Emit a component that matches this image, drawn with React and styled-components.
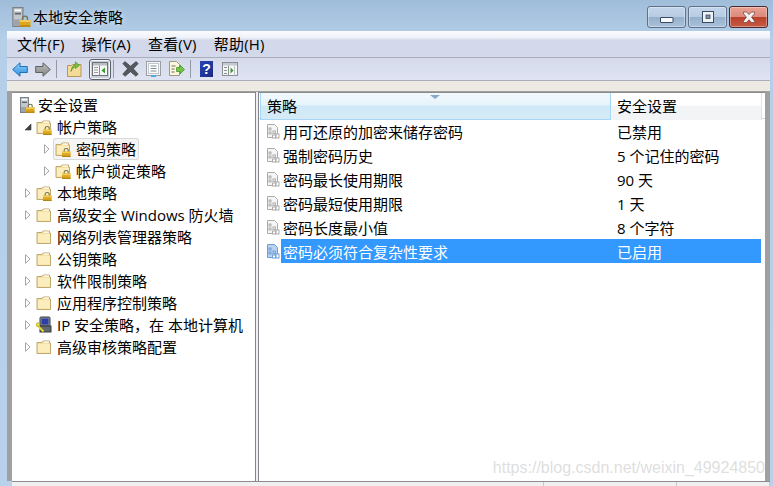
import styled, { createGlobalStyle } from "styled-components";

const treeItems = [
  { id: "accounts", label: "帐户策略", depth: 1, arrow: "open", icon: "lock" },
  { id: "password", label: "密码策略", depth: 2, arrow: "closed", icon: "lock", current: true },
  { id: "lockout", label: "帐户锁定策略", depth: 2, arrow: "closed", icon: "lock" },
  { id: "local", label: "本地策略", depth: 1, arrow: "closed", icon: "lock" },
  { id: "firewall", label: "高级安全 Windows 防火墙", depth: 1, arrow: "closed", icon: "folder" },
  { id: "netlist", label: "网络列表管理器策略", depth: 1, icon: "folder" },
  { id: "pubkey", label: "公钥策略", depth: 1, arrow: "closed", icon: "folder" },
  { id: "software", label: "软件限制策略", depth: 1, arrow: "closed", icon: "folder" },
  { id: "appctl", label: "应用程序控制策略", depth: 1, arrow: "closed", icon: "folder" },
  { id: "ipsec", label: "IP 安全策略，在 本地计算机", depth: 1, arrow: "closed", icon: "ip" },
  { id: "audit", label: "高级审核策略配置", depth: 1, arrow: "closed", icon: "folder" },
];

const policies = [
  { name: "用可还原的加密来储存密码", value: "已禁用" },
  { name: "强制密码历史", value: "5 个记住的密码" },
  { name: "密码最长使用期限", value: "90 天" },
  { name: "密码最短使用期限", value: "1 天" },
  { name: "密码长度最小值", value: "8 个字符" },
  { name: "密码必须符合复杂性要求", value: "已启用", selected: true },
];

function Lock({ x = 7, y = 7 }) {
  return (
    <g transform={`translate(${x} ${y})`}>
      <path d="M2.2 4V2.4C2.2 1.1 3 .5 4.2.5s2 .6 2 1.9V4" fill="none" stroke="#77714f" strokeWidth="1.1" />
      <rect x="0" y="3.6" width="8.6" height="5.4" fill="#dca71f" />
      <rect x="0" y="3.6" width="8.6" height="1.6" fill="#f2cd55" />
      <rect x="0" y="7.8" width="8.6" height="1.2" fill="#b5830f" />
    </g>
  );
}

function FolderIcon({ locked }) {
  return (
    <svg width="16" height="16" viewBox="0 0 16 16">
      <path d="M1 3.5h5l1-1.5h6.5v2h1v10.5H1z" fill="#f4dfa0" stroke="#bfa96f" />
      <rect x="2" y="5" width="12" height="8.5" fill="#fbeebc" />
      <rect x="7.5" y="2.5" width="5.5" height="1.2" fill="#fff" />
      {locked && <Lock />}
    </svg>
  );
}

function ServerLockIcon({ size = 16 }) {
  return (
    <svg width={size} height={size} viewBox="0 0 16 16">
      <rect x="1.5" y=".5" width="8" height="15" fill="#c3c8cc" stroke="#7b8186" />
      <rect x="3" y="2" width="5" height="1.4" fill="#fff" />
      <rect x="3" y="4.6" width="5" height="1.4" fill="#5f666c" />
      <rect x="2" y="10" width="7" height="5" fill="#9ea4a9" />
      <Lock x="7" y="6.8" />
    </svg>
  );
}

function IpIcon() {
  return (
    <svg width="16" height="18" viewBox="0 0 16 18">
      <rect x="4" y="1" width="10" height="9" rx="1" fill="#8a8f96" stroke="#3a3f46" />
      <rect x="5.5" y="2.5" width="7" height="6" fill="#2c3ea8" />
      <rect x="4" y="10" width="11" height="6" fill="#63686e" stroke="#34383d" />
      <path d="M.5 8.5l7 7" stroke="#e8d33a" strokeWidth="2" />
      <circle cx="2" cy="8.5" r="1.8" fill="#f4e24c" stroke="#a08f16" strokeWidth=".6" />
    </svg>
  );
}

function PolicyIcon({ selected }) {
  const line = selected ? "#6f9fd8" : "#ababab";
  return (
    <svg width="14" height="15" viewBox="0 0 14 15">
      <path d="M1.5.5h7l3 3v10h-10z" fill={selected ? "#b9d4f2" : "#f6f6f6"} stroke={line} />
      <rect x="3" y="4" width="2" height="2" fill="none" stroke={line} />
      <rect x="3" y="8" width="2" height="2" fill="none" stroke={line} />
      <rect x="7" y="7" width="2.4" height="2.6" fill="none" stroke={line} />
      <rect x="10" y="10" width="3" height="4" fill="#fff" stroke={line} />
      <rect x="6.5" y="11" width="3" height="3" fill="#fff" stroke={line} />
    </svg>
  );
}

function CaretIcon({ open }) {
  if (open) {
    return (
      <svg width="8" height="8" viewBox="0 0 8 8">
        <path d="M7 1v6H1z" fill="#404040" stroke="#404040" strokeWidth=".6" />
      </svg>
    );
  }
  return (
    <svg width="6" height="10" viewBox="0 0 6 10">
      <path d="M.5.7L5 5 .5 9.3z" fill="#fff" stroke="#a6a6a6" />
    </svg>
  );
}

function ArrowIcon({ dir, color, light, edge }) {
  const id = `arrow-${dir}`;
  const d = dir === "left" ? "M.7 7.5L8 .8v3.7h7.3v6H8v3.7z" : "M15.3 7.5L8 .8v3.7H.7v6H8v3.7z";
  return (
    <svg width="16" height="15" viewBox="0 0 16 15">
      <defs>
        <linearGradient id={id} x1="0" y1="0" x2="0" y2="1">
          <stop offset="0" stopColor={light} />
          <stop offset="1" stopColor={color} />
        </linearGradient>
      </defs>
      <path d={d} fill={`url(#${id})`} stroke={edge} />
    </svg>
  );
}

function UpFolderIcon() {
  return (
    <svg width="15" height="18" viewBox="0 0 15 18">
      <path d="M.5 5.5h4l1-1h8.5v12H.5z" fill="#f4dc98" stroke="#b3985a" />
      <path d="M4 11.5C4.4 7.4 6 5.3 8.4 4.6V1.8l4 3.6-4 3.2V6.6c-1.7.5-3.2 2.2-4.4 4.9z" fill="#7cc043" stroke="#3f8a20" strokeWidth=".6" />
    </svg>
  );
}

function PaneIcon({ accent }) {
  return (
    <svg width="16" height="14" viewBox="0 0 16 14">
      <rect x=".5" y=".5" width="15" height="13" fill="#f6f6f6" stroke="#8b8f94" />
      <rect x="1" y="1" width="14" height="2.5" fill="#c4c9ce" />
      <rect x="2" y="5" width="3" height="1" fill="#8b8f94" />
      <rect x="2" y="8" width="3" height="1" fill="#8b8f94" />
      <rect x="2" y="11" width="3" height="1" fill="#8b8f94" />
      <path d="M6.5 3.5v10" stroke="#8b8f94" />
      <path d="M8.5 5.5l3 3-3 3z" fill={accent} />
      <path d="M12.5 3.5v10" stroke="#c0c4c8" />
    </svg>
  );
}

function ShowPaneIcon() {
  return (
    <svg width="16" height="14" viewBox="0 0 16 14">
      <rect x=".5" y=".5" width="15" height="13" fill="#f6f6f6" stroke="#6f7378" />
      <rect x="1" y="1" width="14" height="2.5" fill="#b8bdc2" />
      <path d="M7.5 3.5v10" stroke="#8b8f94" />
      <path d="M2 5.5h4M2 8h4M2 10.5h4" stroke="#9aa0a6" />
      <path d="M13 5.5L9.5 8.5l3.5 3z" fill="#3a9a2a" />
    </svg>
  );
}

function DeleteIcon() {
  return (
    <svg width="17" height="16" viewBox="0 0 17 16">
      <path d="M.8 2.6L3 .6l5.5 4.6L14 .6l2.2 2-4.8 5.2 4.8 5.3-2.2 2.2-5.5-4.6L3 15.300l-2.200-2.200 4.800-5.300z" fill="#55595d" stroke="#393c40" strokeWidth=".6" />
    </svg>
  );
}

function PropertiesIcon() {
  return (
    <svg width="15" height="16" viewBox="0 0 15 16">
      <rect x=".5" y=".5" width="14" height="14" fill="#f4f5f6" stroke="#9a9ea2" />
      <rect x="2.500" y="2.500" width="10" height="10" fill="#fff" stroke="#c2c6ca" />
      <path d="M4.500 5h6M4.500 7.500h6M4.500 10h6" stroke="#7d8a9a" />
      <rect x="5" y="14" width="5" height="2" fill="#46aee8" />
    </svg>
  );
}

function ExportIcon() {
  return (
    <svg width="17" height="16" viewBox="0 0 17 16">
      <path d="M1.500.5h7l3 3v11h-10z" fill="#fbf6dc" stroke="#9d9a84" />
      <path d="M3.500 5h4M3.500 8h3M3.500 11h3" stroke="#6f6f66" />
      <path d="M8.500 6.500h3.500V4l4.500 4.500L12 13v-2.500H8.500z" fill="#75c24a" stroke="#3f8f24" strokeWidth=".7" />
    </svg>
  );
}

function CaptionGlyph({ kind }) {
  if (kind === "min") {
    return (
      <svg width="14" height="8" viewBox="0 0 14 8" style={{ marginTop: 6 }}>
        <rect x=".5" y="1.500" width="12.500" height="5" rx=".5" fill="#f6f8fb" stroke="#3a4a60" />
      </svg>
    );
  }
  if (kind === "max") {
    return (
      <svg width="14" height="13" viewBox="0 0 14 13">
        <rect x="1.500" y=".5" width="11" height="11" fill="#eef1f5" stroke="#3a4a60" />
        <rect x="5" y="4" width="4" height="3.500" fill="#7d92ad" stroke="#3a4a60" strokeWidth=".8" />
      </svg>
    );
  }
  return (
    <svg width="16" height="13" viewBox="0 0 16 13">
      <path d="M2.500 1h3L8 3.600 10.500 1h3v1.600L10.600 6.200l3 4v1.300h-3L8 8.800l-2.600 2.700h-3v-1.300l3-4L2.500 2.600z" fill="#f3f3f3" stroke="#6b3a38" strokeWidth=".7" />
    </svg>
  );
}

export default function App() {
  return (
    <Window>
      <GlobalStyle />
      <TitleBar>
        <TitleIcon>
          <ServerLockIcon size={20} />
        </TitleIcon>
        <TitleText>本地安全策略</TitleText>
        <CaptionButtons>
          <CaptionButton>
            <CaptionGlyph kind="min" />
          </CaptionButton>
          <CaptionButton>
            <CaptionGlyph kind="max" />
          </CaptionButton>
          <CaptionButton $close>
            <CaptionGlyph kind="close" />
          </CaptionButton>
        </CaptionButtons>
      </TitleBar>
      <Chrome>
        <MenuBar>
          <MenuItem>文件(F)</MenuItem>
          <MenuItem>操作(A)</MenuItem>
          <MenuItem>查看(V)</MenuItem>
          <MenuItem>帮助(H)</MenuItem>
        </MenuBar>
        <Toolbar>
          <ToolButton>
            <ArrowIcon dir="left" light="#8fd0fa" color="#2f8fe0" edge="#1d6fb8" />
          </ToolButton>
          <ToolButton>
            <ArrowIcon dir="right" light="#bdbdbd" color="#858585" edge="#5f5f5f" />
          </ToolButton>
          <ToolSeparator $after={6} />
          <ToolButton>
            <UpFolderIcon />
          </ToolButton>
          <ToolButton $active>
            <ShowPaneIcon />
          </ToolButton>
          <ToolSeparator $after={5} />
          <ToolButton>
            <DeleteIcon />
          </ToolButton>
          <ToolButton>
            <PropertiesIcon />
          </ToolButton>
          <ToolButton>
            <ExportIcon />
          </ToolButton>
          <ToolSeparator $after={4} />
          <ToolButton>
            <HelpBadge>?</HelpBadge>
          </ToolButton>
          <ToolButton>
            <PaneIcon accent="#3a9a2a" />
          </ToolButton>
        </Toolbar>
        <Strip />
      </Chrome>
      <Workspace>
        <TreePane>
          <TreeRow $depth={0}>
            <TreeNode>
              <ServerLockIcon />
              <TreeLabel $root>安全设置</TreeLabel>
            </TreeNode>
          </TreeRow>
          {treeItems.map((item) => (
            <TreeRow key={item.id} $depth={item.depth}>
              <Expander>{item.arrow && <CaretIcon open={item.arrow === "open"} />}</Expander>
              <TreeNode $current={item.current}>
                {item.icon === "ip" ? <IpIcon /> : <FolderIcon locked={item.icon === "lock"} />}
                <TreeLabel>{item.label}</TreeLabel>
              </TreeNode>
            </TreeRow>
          ))}
        </TreePane>
        <Splitter />
        <ListPane>
          <ListHeader>
            <HeaderCell $sorted>策略</HeaderCell>
            <HeaderCell>安全设置</HeaderCell>
          </ListHeader>
          {policies.map((policy) => (
            <PolicyRow key={policy.name}>
              <PolicyIconCell>
                <PolicyIcon selected={policy.selected} />
              </PolicyIconCell>
              <PolicyCells $selected={policy.selected}>
                <PolicyName>{policy.name}</PolicyName>
                <PolicyValue>{policy.value}</PolicyValue>
              </PolicyCells>
            </PolicyRow>
          ))}
          <Watermark>https://blog.csdn.net/weixin_49924850</Watermark>
        </ListPane>
      </Workspace>
      <StatusBar>
        <StatusCell $width={532} />
        <StatusCell $width={133} />
        <StatusCell $width={93} />
      </StatusBar>
    </Window>
  );
}

const GlobalStyle = createGlobalStyle`
  html, body {
    margin: 0;
    padding: 0;
    background: #b9d1ea;
  }
  * {
    box-sizing: border-box;
  }
`;

const Window = styled.div`
  width: 773px;
  height: 486px;
  overflow: hidden;
  display: flex;
  flex-direction: column;
  padding: 0 3px 0 7px;
  background: linear-gradient(180deg, #9fbcd9 0%, #b5cfe9 8%, #b9d1ea 100%);
  font-family: "Open Sans", "Noto Sans CJK SC", sans-serif;
  font-size: 15px;
  color: #000;
`;

const TitleBar = styled.div`
  height: 31px;
  flex: none;
  display: flex;
  align-items: flex-start;
`;

const TitleIcon = styled.div`
  width: 26px;
  height: 31px;
  flex: none;
  display: flex;
  padding: 7px 0 0 4px;
`;

const TitleText = styled.div`
  line-height: 20px;
  margin-top: 7px;
  text-shadow: 0 0 6px rgba(255, 255, 255, 0.8);
`;

const CaptionButtons = styled.div`
  margin-left: auto;
  margin-right: 2px;
  margin-top: 6px;
  display: flex;
  gap: 2px;
`;

const CaptionButton = styled.div`
  width: 39px;
  height: 22px;
  display: flex;
  align-items: center;
  justify-content: center;
  border: 1px solid ${(p) => (p.$close ? "#4b2730" : "#5f7089")};
  border-radius: 3px;
  box-shadow: inset 0 0 0 1px rgba(255, 255, 255, 0.35);
  background: ${(p) =>
    p.$close
      ? "linear-gradient(180deg, #e9a294 0%, #dc8a7a 48%, #b9402c 50%, #c65a44 100%)"
      : "linear-gradient(180deg, #c3d5e9 0%, #b7cce3 48%, #95b0cc 50%, #a9c1da 100%)"};
`;

const Chrome = styled.div`
  flex: none;
  display: flex;
  flex-direction: column;
`;

const MenuBar = styled.div`
  height: 27px;
  display: flex;
  align-items: center;
  gap: 17px;
  padding: 0 0 0 10px;
  border-bottom: 1px solid #a9adb5;
  background: linear-gradient(180deg, #fbfcfe 0%, #eff2f9 25%, #d3d9eb 35%, #d3d9eb 100%);
`;

const MenuItem = styled.div`
  line-height: 20px;
  letter-spacing: 0.2px;
  white-space: nowrap;
`;

const Toolbar = styled.div`
  height: 23px;
  display: flex;
  align-items: center;
  padding: 0 0 0 1px;
  border-bottom: 1px solid #a9adb5;
  background: linear-gradient(180deg, #d5dbec 0%, #dfe3f2 100%);
`;

const ToolButton = styled.div`
  width: ${(p) => (p.$active ? "22px" : "23px")};
  height: ${(p) => (p.$active ? "21px" : "22px")};
  flex: none;
  display: flex;
  align-items: center;
  justify-content: center;
  ${(p) =>
    p.$active &&
    `
    margin-left: 3px;
    border: 1px solid #5c6068;
    border-radius: 3px;
    background: #c9cfdc;
    box-shadow: inset 0 0 0 1px #f3f5f9;
  `}
`;

const ToolSeparator = styled.div`
  width: 1px;
  height: 18px;
  flex: none;
  margin: 0 ${(p) => p.$after}px 0 2px;
  background: #9599a3;
`;

const HelpBadge = styled.div`
  width: 13px;
  height: 16px;
  line-height: 16px;
  text-align: center;
  font-family: "Liberation Sans", sans-serif;
  font-size: 14px;
  font-weight: 700;
  color: #fff;
  background: linear-gradient(135deg, #2a44b8, #1a2a80);
`;

const Strip = styled.div`
  height: 10px;
  background: #eceae3;
`;

const Workspace = styled.div`
  flex: 1;
  min-height: 0;
  display: flex;
  padding: 1px 5px 0;
  background: #a0a0a0;
`;

const TreePane = styled.div`
  width: 243px;
  flex: none;
  padding-top: 1px;
  background: #fff;
  border-top: 1px solid #8c8c8c;
`;

const TreeRow = styled.div`
  height: 22px;
  display: flex;
  align-items: center;
  padding-left: ${(p) => [5, 10, 29][p.$depth]}px;
  white-space: nowrap;
`;

const Expander = styled.div`
  width: 11px;
  margin-right: 1px;
  flex: none;
  display: flex;
  justify-content: center;
`;

const TreeNode = styled.div`
  height: 22px;
  display: flex;
  align-items: center;
  padding: 0 2px 0 1px;
  border: 1px solid ${(p) => (p.$current ? "#d9d9d9" : "transparent")};
  border-radius: 2px;
  background: ${(p) => (p.$current ? "#f5f5f5" : "transparent")};
  svg {
    flex: none;
  }
`;

const TreeLabel = styled.span`
  margin-left: ${(p) => (p.$root ? "3px" : "5px")};
  line-height: 20px;
`;

const Splitter = styled.div`
  width: 4px;
  flex: none;
  background: #f0f0f0;
  border-left: 1px solid #85858f;
  border-right: 1px solid #85858f;
`;

const ListPane = styled.div`
  flex: 1;
  min-width: 0;
  position: relative;
  background: #fff;
  border-top: 1px solid #8c8c8c;
`;

const ListHeader = styled.div`
  height: 26px;
  display: grid;
  grid-template-columns: 351px 151px;
  padding-left: 1px;
  border-bottom: 1px solid #d5d5d5;
  line-height: 26px;
`;

const HeaderCell = styled.div`
  position: relative;
  padding-left: 6px;
  border-right: 1px solid ${(p) => (p.$sorted ? "#a4d8f6" : "#e3e3e3")};
  background: ${(p) =>
    p.$sorted
      ? "linear-gradient(180deg, #f2f9fd 0%, #e6f4fb 45%, #cfe9f7 50%, #d6eaf6 100%)"
      : "linear-gradient(180deg, #ffffff 0%, #ffffff 45%, #f3f4f6 50%, #f2f3f5 100%)"};
  ${(p) =>
    p.$sorted &&
    `
    border-left: 1px solid #a4d8f6;
    border-bottom: 1px solid #a4d8f6;
    &::before {
      content: "";
      position: absolute;
      top: 2px;
      left: 169px;
      border-style: solid;
      border-width: 4px 5px 0 5px;
      border-color: #86a9cc transparent transparent transparent;
    }
  `}
`;

const PolicyRow = styled.div`
  height: 24px;
  display: flex;
  align-items: center;
  white-space: nowrap;
`;

const PolicyIconCell = styled.div`
  width: 22px;
  flex: none;
  display: flex;
  justify-content: flex-end;
  padding-right: 1px;
`;

const PolicyCells = styled.div`
  width: 480px;
  height: 24px;
  display: flex;
  align-items: center;
  color: ${(p) => (p.$selected ? "#fff" : "#000")};
  background: ${(p) => (p.$selected ? "#3399ff" : "transparent")};
`;

const PolicyName = styled.div`
  width: 336px;
  flex: none;
  padding-left: 2px;
`;

const PolicyValue = styled.div`
  flex: 1;
`;

const Watermark = styled.div`
  position: absolute;
  right: 0;
  bottom: 4px;
  font-family: "Liberation Sans", sans-serif;
  font-size: 16px;
  line-height: 18px;
  white-space: nowrap;
  color: rgba(170, 170, 170, 0.4);
`;

const StatusBar = styled.div`
  height: 5px;
  flex: none;
  margin-left: 5px;
  display: flex;
  background: #f0f0f0;
  border-top: 1px solid #8c8c8c;
`;

const StatusCell = styled.div`
  width: ${(p) => p.$width}px;
  border-right: 1px solid #c8c8c8;
`;
